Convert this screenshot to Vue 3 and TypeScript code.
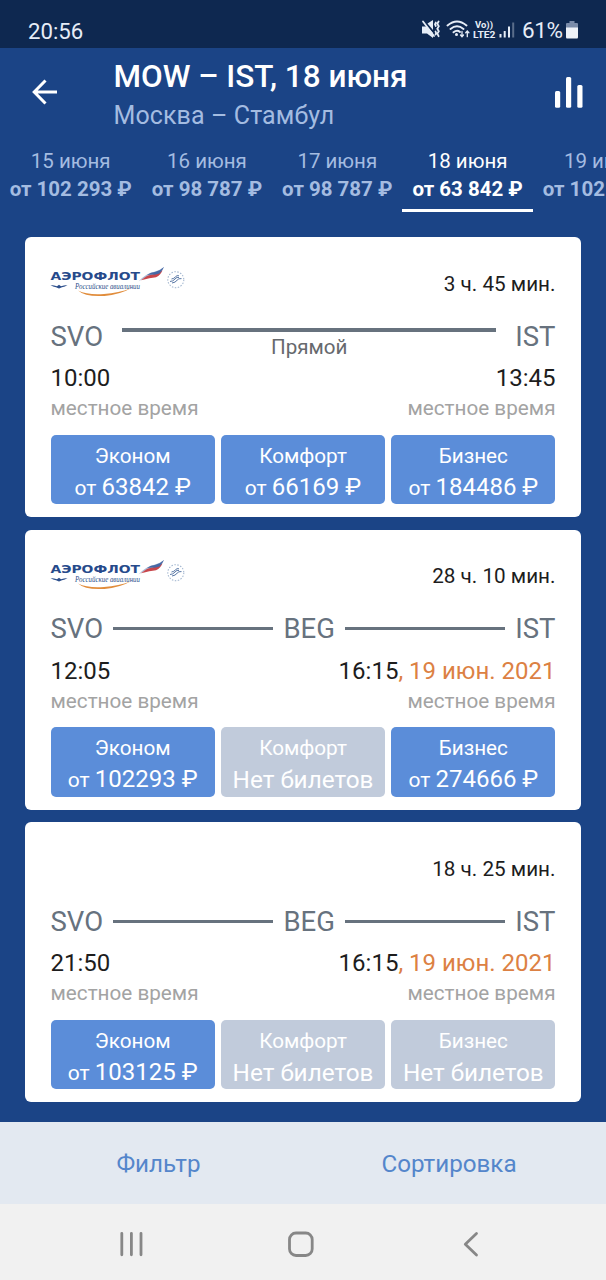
<script setup lang="ts">
interface Fare {
  name: string
  price: number | null
}
interface Flight {
  logo: boolean
  duration: string
  stops: string[]
  depart: string
  arrive: string
  arriveDate?: string
  fares: Fare[]
}
interface DateTab {
  day: string
  price: string
  active?: boolean
}

const tabs: DateTab[] = [
  { day: '15 июня', price: '102 293' },
  { day: '16 июня', price: '98 787' },
  { day: '17 июня', price: '98 787' },
  { day: '18 июня', price: '63 842', active: true },
  { day: '19 июня', price: '102 293' },
]

const fares = (economy: number | null, comfort: number | null, business: number | null): Fare[] => [
  { name: 'Эконом', price: economy },
  { name: 'Комфорт', price: comfort },
  { name: 'Бизнес', price: business },
]

const flights: Flight[] = [
  { logo: true, duration: '3 ч. 45 мин.', stops: [], depart: '10:00', arrive: '13:45', fares: fares(63842, 66169, 184486) },
  { logo: true, duration: '28 ч. 10 мин.', stops: ['BEG'], depart: '12:05', arrive: '16:15', arriveDate: ', 19 июн. 2021', fares: fares(102293, null, 274666) },
  { logo: false, duration: '18 ч. 25 мин.', stops: ['BEG'], depart: '21:50', arrive: '16:15', arriveDate: ', 19 июн. 2021', fares: fares(103125, null, null) },
]
</script>

<template>
  <div class="screen">
    <div class="status">
      <span class="clock">20:56</span>
      <svg class="status-icons" width="96" height="24" viewBox="420 18 96 24">
        <g fill="#e6edf7">
          <path d="M422 26.500h5l6 6.500v5l-6-4.500h-5z" />
          <path d="M427.500 23.500l5.500-3.500v10z" />
        </g>
        <g fill="none" stroke="#e6edf7" stroke-linecap="round">
          <path d="M423 21.500l11 14.500" stroke-width="1.800" />
          <path d="M438.600 21.500l-1.300 2.200 1.500 2.500-1.500 2.500 1.500 2.500-1.500 2.500 1.300 2.500M435.800 22.500l-.8 1.800.8 1.700M435.500 31.500l.6 1.500-.6 1.500" stroke-width="1.800" />
          <path d="M447.500 25.500q9.500-8 19 0M450.500 29q6.500-5.500 13 0M453.500 32.300q3.500-2.800 6.500-.3" stroke-width="1.900" />
          <path d="M462 31.500v5M460.500 35l1.500 1.700 1.500-1.700M467.300 36.700v-5.500M465.700 32.700l1.600-1.700 1.600 1.700" stroke-width="1.300" />
        </g>
        <circle cx="456.500" cy="34.500" r="1.500" fill="#e6edf7" />
        <g class="lte" fill="#e6edf7">
          <text x="475" y="27.500" textLength="18" lengthAdjust="spacingAndGlyphs">Vo))</text>
          <text x="473" y="37.500" textLength="22.500" lengthAdjust="spacingAndGlyphs">LTE2</text>
        </g>
        <g fill="#e6edf7">
          <rect x="499.500" y="34" width="2" height="3.500" />
          <rect x="503.700" y="31" width="2" height="6.500" />
          <rect x="508" y="26.500" width="2" height="11" />
          <rect x="512.200" y="22.500" width="2" height="15" opacity=".35" />
        </g>
      </svg>
      <span class="percent">61%</span>
      <svg class="battery" width="12" height="18" viewBox="0 0 12 18">
        <path d="M3.500 0h5v2h2.500q1 0 1 1v4.500H0V3q0-1 1-1h2.500z" fill="#7a8caa" />
        <path d="M0 6.500h12V16q0 1.500-1 1.500H1Q0 17.500 0 16z" fill="#eef2f8" />
      </svg>
    </div>

    <header class="header">
      <svg class="back" width="26" height="26" viewBox="0 0 26 26" fill="none" stroke="#fff" stroke-width="3">
        <path d="M25 13H2.500M13.500 1.500L2.200 13l11.300 11.500" />
      </svg>
      <div class="titles">
        <h1>MOW – IST, 18 июня</h1>
        <p>Москва – Стамбул</p>
      </div>
      <svg class="chart" width="28" height="31" viewBox="0 0 28 31" fill="#fff">
        <rect x="0" y="14" width="5.200" height="16.700" rx="1.500" />
        <rect x="11" y="0" width="5.200" height="30.700" rx="1.500" />
        <rect x="22.300" y="8" width="5.200" height="22.700" rx="1.500" />
      </svg>
    </header>

    <nav class="tabs">
      <div v-for="tab in tabs" :key="tab.day" class="tab" :class="{ active: tab.active }">
        <span class="day">{{ tab.day }}</span>
        <span class="tab-price">от {{ tab.price }} ₽</span>
      </div>
    </nav>

    <main class="list">
      <article v-for="flight in flights" :key="flight.depart" class="card">
        <div class="top">
          <svg v-if="flight.logo" class="logo" width="136" height="34" viewBox="50 265 136 34">
            <text class="brand" x="50.500" y="279.800" textLength="89.500" lengthAdjust="spacingAndGlyphs">АЭРОФЛОТ</text>
            <text class="sub" x="75" y="288.500" textLength="65" lengthAdjust="spacingAndGlyphs">Российские авиалинии</text>
            <path d="M50.500 285q4 .2 6.500 1.200l2-1.500 2 1.500q2.500-1 6.500-1.200-2.500 1.800-5.500 2.200l-3 1.300-3-1.300q-3-.4-5.500-2.200z" fill="#2c4f8c" />
            <path d="M78 290.500q10 4.800 26 3.500 15-1.200 26.500-5.500-11 6.300-26 7.400-19 1.300-26.500-5.400z" fill="#e18d3c" />
            <path d="M138.500 281.500q8-8.500 15-9.500 5-.8 10.500-5-3 6-9.500 7.500-7 1-16 7z" fill="#a9b9d6" />
            <path d="M141 280.300q6-5.300 12-6 5.500-.5 9.500-4-1.500 4.500-6.500 7-6 .5-15 3z" fill="#c8464b" />
            <path d="M147 275q4-2.800 8-3 5-1 9-5-1.500 3.500-4.500 6.500-4 1.500-7 1z" fill="#4568a5" />
            <circle cx="175.800" cy="279.700" r="8" fill="none" stroke="#a3b7d0" stroke-width="1.100" stroke-dasharray="1.500 1.500" />
            <path d="M170 281.500q3 0 5-2.500t4-1.500M172 283q3.500-.5 5-2.700t4.500-1.700M171.500 279q2.500-.3 4-2.200t3.500-1" fill="none" stroke="#5877a5" stroke-width="1" />
          </svg>
          <span class="duration">{{ flight.duration }}</span>
        </div>

        <div class="route" :class="{ direct: !flight.stops.length }">
          <span>SVO</span>
          <span class="line"><em v-if="!flight.stops.length">Прямой</em></span>
          <template v-for="stop in flight.stops" :key="stop">
            <span>{{ stop }}</span>
            <span class="line"></span>
          </template>
          <span>IST</span>
        </div>

        <div class="times">
          <span>{{ flight.depart }}</span>
          <span>{{ flight.arrive }}<b v-if="flight.arriveDate">{{ flight.arriveDate }}</b></span>
        </div>
        <div class="local">
          <span>местное время</span>
          <span>местное время</span>
        </div>

        <div class="fares">
          <button v-for="fare in flight.fares" :key="fare.name" class="fare" :class="{ none: fare.price === null }">
            <span class="fare-name">{{ fare.name }}</span>
            <span v-if="fare.price !== null" class="fare-price"><small>от </small>{{ fare.price }} ₽</span>
            <span v-else class="fare-price empty">Нет билетов</span>
          </button>
        </div>
      </article>
    </main>

    <footer class="actions">
      <span class="filter">Фильтр</span>
      <span class="sort">Сортировка</span>
    </footer>

    <div class="system">
      <svg width="606" height="76" viewBox="0 0 606 76" fill="none" stroke="#878787" stroke-width="2.800" stroke-linecap="round" stroke-linejoin="round">
        <path d="M121.800 29.300v21.500M131.400 29.300v21.500M141 29.300v21.500" />
        <rect x="289.500" y="29" width="22.700" height="22.500" rx="6.500" />
        <path d="M476.500 29.500L465.300 40.200l11.200 10.800" />
      </svg>
    </div>
  </div>
</template>

<style>
body {
  background: #1b4486;
}
</style>

<style scoped>
.screen {
  width: 606px;
  height: 1280px;
  overflow: hidden;
  display: flex;
  flex-direction: column;
  background: #1b4486;
  font-family: Roboto, "Noto Sans", sans-serif;
}
.screen > * {
  flex-shrink: 0;
}
.status {
  height: 48px;
  box-sizing: border-box;
  padding: 12px 28px 0;
  display: flex;
  align-items: center;
  background: #0e2850;
  color: #e6edf7;
}
.clock {
  font-size: 22.200px;
  line-height: 30px;
  padding-top: 1px;
  margin-right: auto;
}
.status-icons {
  margin-top: -1px;
}
.lte {
  font-size: 9.500px;
  font-weight: 700;
}
.percent {
  font-size: 22.500px;
  margin-left: 6px;
  width: 44px;
  letter-spacing: -.4px;
}
.battery {
  margin-top: -1px;
}
.header {
  height: 92px;
  box-sizing: border-box;
  padding: 0 23px 0 32px;
  display: flex;
  align-items: flex-start;
  color: #fff;
}
.back {
  margin-top: 31px;
}
.titles {
  flex: 1;
  margin-left: 55.500px;
  padding-top: 11px;
}
h1 {
  margin: 0;
  font-size: 31.500px;
  line-height: 36px;
  font-weight: 500;
}
p {
  margin: 4px 0 0;
  font-size: 25px;
  line-height: 34px;
  letter-spacing: .1px;
  color: #a4bce1;
}
.chart {
  margin-top: 29px;
}
.tabs {
  display: flex;
  height: 72px;
  overflow: hidden;
  margin-left: -.3px;
}
.tab {
  flex: none;
  box-sizing: border-box;
  padding: 7px 10px 0;
  display: flex;
  flex-direction: column;
  align-items: center;
  color: #a4bce1;
  white-space: nowrap;
  border-bottom: 3px solid transparent;
}
.tab.active {
  color: #fff;
  border-color: #fff;
}
.day {
  font-size: 20.500px;
  line-height: 28px;
}
.tab-price {
  font-size: 20.500px;
  line-height: 29px;
  font-weight: 700;
}
.list {
  flex: 1;
  padding: 25px 25px 0;
  display: flex;
  flex-direction: column;
  gap: 12.500px;
}
.card {
  height: 280px;
  box-sizing: border-box;
  padding: 27.500px 25.500px 0;
  border-radius: 6px;
  background: #fff;
}
.top {
  height: 53.500px;
  display: flex;
  align-items: flex-start;
}
.logo {
  margin: .5px 0 0 -.5px;
}
.brand {
  font: 700 11.300px "DejaVu Sans", sans-serif;
  fill: #264a8b;
}
.sub {
  font: italic 400 7.800px "Liberation Serif", serif;
  fill: #2c508a;
}
.duration {
  margin-left: auto;
  font-size: 20.700px;
  line-height: 38px;
  color: #1d1d1d;
}
.route {
  height: 36px;
  display: flex;
  align-items: center;
  gap: 10px;
  font-size: 27.500px;
  color: #67727e;
}
.line {
  flex: 1;
  height: 3px;
  background: #67727e;
}
.direct {
  gap: 19px;
}
.direct .line {
  height: 4px;
  margin-top: -12px;
  text-align: center;
}
.direct em {
  display: block;
  padding-top: 5px;
  font-style: normal;
  font-size: 20.600px;
  line-height: 28px;
  color: #66696d;
}
.times,
.local {
  display: flex;
  justify-content: space-between;
}
.times {
  margin-top: 8px;
  font-size: 24px;
  line-height: 32px;
  color: #1d1d1d;
}
.times b {
  font-weight: 400;
  color: #dc8143;
}
.local {
  font-size: 20.700px;
  line-height: 28px;
  color: #a3a3a3;
}
.fares {
  margin: 12.500px 0 0;
  display: grid;
  grid-template-columns: repeat(3, 1fr);
  gap: 6px;
}
.fare {
  height: 69.500px;
  padding: 6px 0 0;
  border: 0;
  border-radius: 5px;
  background: #5b8dd9;
  color: #fff;
  font-family: inherit;
  display: flex;
  flex-direction: column;
  align-items: center;
}
.fare.none {
  background: #c1cbdb;
}
.fare-name {
  font-size: 20.700px;
  line-height: 31px;
}
.fare-price {
  font-size: 24px;
  line-height: 31px;
  white-space: nowrap;
}
.fare-price.empty {
  font-size: 24.300px;
}
.fare-price small {
  font-size: 21px;
}
.actions {
  height: 82px;
  box-sizing: border-box;
  padding-top: 1px;
  display: grid;
  grid-template-columns: 1fr 1fr;
  align-items: center;
  text-align: center;
  background: #e3e9f1;
  color: #5486cb;
  font-size: 24.200px;
}
.filter {
  padding-left: 14px;
}
.sort {
  padding-right: 11px;
}
.system {
  height: 76px;
  background: #f1f1f1;
}
</style>
